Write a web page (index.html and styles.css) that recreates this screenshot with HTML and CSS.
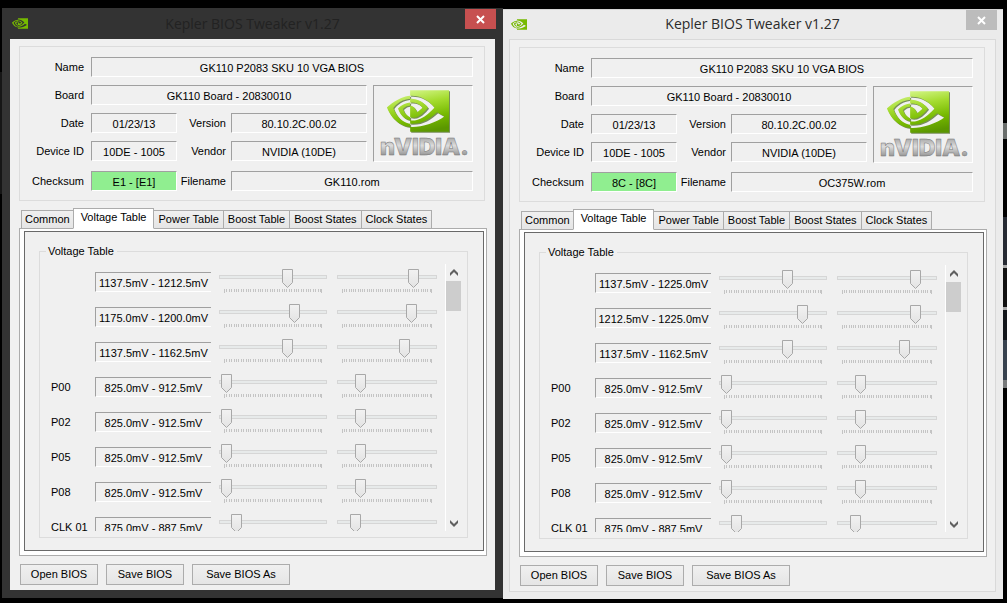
FILE: index.html
```html
<!DOCTYPE html>
<html lang="en">
<head>
<meta charset="utf-8">
<title>Kepler BIOS Tweaker v1.27</title>
<link rel="stylesheet" href="styles.css">
</head>
<body>
<svg class="defs" width="0" height="0" aria-hidden="true">
  <defs>
    <linearGradient id="green" x1="0.3" y1="0" x2="0.6" y2="1">
      <stop offset="0" stop-color="#d6f78c"/><stop offset="0.35" stop-color="#a5dc30"/><stop offset="0.7" stop-color="#76b900"/><stop offset="1" stop-color="#5b9700"/>
    </linearGradient>
    <linearGradient id="steel" x1="0" y1="0" x2="0" y2="1">
      <stop offset="0" stop-color="#8c8c8c"/><stop offset="0.45" stop-color="#dcdcdc"/><stop offset="1" stop-color="#6c6c6c"/>
    </linearGradient>
    <symbol id="eye" viewBox="0 4 24 16">
      <path d="M8.948 8.798v-1.43a6.7 6.7 0 0 1 .424-.018c3.922-.124 6.493 3.374 6.493 3.374s-2.774 3.851-5.75 3.851c-.398 0-.787-.062-1.158-.185v-4.346c1.528.185 1.837.857 2.747 2.385l2.04-1.714s-1.492-1.952-4-1.952a6.016 6.016 0 0 0-.796.035m0-4.735v2.138l.424-.027c5.45-.185 9.01 4.47 9.01 4.47s-4.08 4.964-8.33 4.964c-.37 0-.733-.035-1.095-.097v1.325c.3.035.61.062.91.062 3.957 0 6.82-2.023 9.593-4.408.459.371 2.34 1.263 2.73 1.652-2.633 2.208-8.772 3.984-12.253 3.984-.335 0-.653-.018-.971-.053v1.864H24V4.063zm0 10.326v1.131c-3.657-.654-4.673-4.46-4.673-4.46s1.758-1.944 4.673-2.262v1.237H8.94c-1.528-.186-2.73 1.245-2.73 1.245s.68 2.412 2.739 3.11M2.456 10.9s2.164-3.197 6.5-3.533V6.201C4.153 6.59 0 10.653 0 10.653s2.35 6.802 8.948 7.42v-1.237c-4.84-.6-6.492-5.936-6.492-5.936z"/>
    </symbol>
    <symbol id="cross" viewBox="0 0 9 9"><path d="M1 1l7 7M8 1l-7 7" fill="none" stroke="#fff" stroke-width="2"/></symbol>
    <symbol id="up" viewBox="0 0 8 8"><path d="M0 7V4l4-4 4 4v3L4 3z" fill="#606060"/></symbol>
    <symbol id="down" viewBox="0 0 8 8"><path d="M0 1v3l4 4 4-4V1L4 5z" fill="#606060"/></symbol>
    <symbol id="nvidia" viewBox="0 0 98 75">
      <svg x="14" y="5" width="62" height="42" viewBox="0 4 24 16" preserveAspectRatio="none"><use href="#eye" y="4" width="24" height="16" fill="#44641a" opacity="0.7"/></svg>
      <svg x="13" y="4" width="62" height="42" viewBox="0 4 24 16" preserveAspectRatio="none"><use href="#eye" y="4" width="24" height="16" fill="url(#green)"/></svg>
      <text class="wordmark" x="6" y="69">nVIDIA.</text>
    </symbol>
  </defs>
</svg>

<main class="desktop">
<section class="window dark">
  <header class="titlebar">
    <svg class="app-icon"><use href="#eye" fill="#76b900"/></svg>
    <h1>Kepler BIOS Tweaker v1.27</h1>
    <button class="close" aria-label="Close"><svg><use href="#cross"/></svg></button>
  </header>
  <div class="client">
    <div class="info">
      <label for="a-name">Name</label><output id="a-name" class="field wide">GK110 P2083 SKU 10 VGA BIOS</output>
      <label for="a-board">Board</label><output id="a-board" class="field mid">GK110 Board - 20830010</output>
      <svg class="field logo" role="img" aria-label="NVIDIA"><use href="#nvidia"/></svg>
      <label for="a-date">Date</label><output id="a-date" class="field">01/23/13</output>
      <label for="a-ver">Version</label><output id="a-ver" class="field">80.10.2C.00.02</output>
      <label for="a-dev">Device ID</label><output id="a-dev" class="field">10DE - 1005</output>
      <label for="a-ven">Vendor</label><output id="a-ven" class="field">NVIDIA (10DE)</output>
      <label for="a-sum" class="last">Checksum</label><output id="a-sum" class="field ok last">E1 - [E1]</output>
      <label for="a-file" class="last">Filename</label><output id="a-file" class="field rest last">GK110.rom</output>
    </div>
    <div class="tabs" role="tablist">
      <button role="tab">Common</button><button role="tab" aria-selected="true">Voltage Table</button><button role="tab">Power Table</button><button role="tab">Boost Table</button><button role="tab">Boost States</button><button role="tab">Clock States</button>
    </div>
    <div class="page" role="tabpanel">
      <div class="sheet">
        <fieldset class="group">
          <legend>Voltage Table</legend>
          <div class="list">
            <div class="row"><span></span><output class="field">1137.5mV - 1212.5mV</output><input type="range" aria-label="Minimum" max="93" value="61"><input type="range" class="fine" aria-label="Maximum" max="85" value="69"></div>
            <div class="row"><span></span><output class="field">1175.0mV - 1200.0mV</output><input type="range" aria-label="Minimum" max="93" value="68"><input type="range" class="fine" aria-label="Maximum" max="85" value="67"></div>
            <div class="row"><span></span><output class="field">1137.5mV - 1162.5mV</output><input type="range" aria-label="Minimum" max="93" value="61"><input type="range" class="fine" aria-label="Maximum" max="85" value="60"></div>
            <div class="row"><label for="a-p00">P00</label><output class="field">825.0mV - 912.5mV</output><input type="range" id="a-p00" max="93" value="0"><input type="range" class="fine" aria-label="P00 maximum" max="85" value="16"></div>
            <div class="row"><label for="a-p02">P02</label><output class="field">825.0mV - 912.5mV</output><input type="range" id="a-p02" max="93" value="0"><input type="range" class="fine" aria-label="P02 maximum" max="85" value="16"></div>
            <div class="row"><label for="a-p05">P05</label><output class="field">825.0mV - 912.5mV</output><input type="range" id="a-p05" max="93" value="0"><input type="range" class="fine" aria-label="P05 maximum" max="85" value="16"></div>
            <div class="row"><label for="a-p08">P08</label><output class="field">825.0mV - 912.5mV</output><input type="range" id="a-p08" max="93" value="0"><input type="range" class="fine" aria-label="P08 maximum" max="85" value="16"></div>
            <div class="row"><label for="a-clk">CLK 01</label><output class="field">875.0mV - 887.5mV</output><input type="range" id="a-clk" max="93" value="10"><input type="range" class="fine" aria-label="CLK 01 maximum" max="85" value="11"></div>
          </div>
          <div class="scrollbar">
            <button aria-label="Scroll up"><svg><use href="#up"/></svg></button>
            <div class="thumb"></div>
            <button aria-label="Scroll down"><svg><use href="#down"/></svg></button>
          </div>
        </fieldset>
      </div>
    </div>
    <div class="actions"><button>Open BIOS</button><button>Save BIOS</button><button class="long">Save BIOS As</button></div>
  </div>
</section>

<section class="window light">
  <header class="titlebar">
    <svg class="app-icon"><use href="#eye" fill="#76b900"/></svg>
    <h1>Kepler BIOS Tweaker v1.27</h1>
    <button class="close" aria-label="Close"><svg><use href="#cross"/></svg></button>
  </header>
  <div class="client">
    <div class="info">
      <label for="b-name">Name</label><output id="b-name" class="field wide">GK110 P2083 SKU 10 VGA BIOS</output>
      <label for="b-board">Board</label><output id="b-board" class="field mid">GK110 Board - 20830010</output>
      <svg class="field logo" role="img" aria-label="NVIDIA"><use href="#nvidia"/></svg>
      <label for="b-date">Date</label><output id="b-date" class="field">01/23/13</output>
      <label for="b-ver">Version</label><output id="b-ver" class="field">80.10.2C.00.02</output>
      <label for="b-dev">Device ID</label><output id="b-dev" class="field">10DE - 1005</output>
      <label for="b-ven">Vendor</label><output id="b-ven" class="field">NVIDIA (10DE)</output>
      <label for="b-sum" class="last">Checksum</label><output id="b-sum" class="field ok last">8C - [8C]</output>
      <label for="b-file" class="last">Filename</label><output id="b-file" class="field rest last">OC375W.rom</output>
    </div>
    <div class="tabs" role="tablist">
      <button role="tab">Common</button><button role="tab" aria-selected="true">Voltage Table</button><button role="tab">Power Table</button><button role="tab">Boost Table</button><button role="tab">Boost States</button><button role="tab">Clock States</button>
    </div>
    <div class="page" role="tabpanel">
      <div class="sheet">
        <fieldset class="group">
          <legend>Voltage Table</legend>
          <div class="list">
            <div class="row"><span></span><output class="field">1137.5mV - 1225.0mV</output><input type="range" aria-label="Minimum" max="93" value="61"><input type="range" class="fine" aria-label="Maximum" max="85" value="71"></div>
            <div class="row"><span></span><output class="field">1212.5mV - 1225.0mV</output><input type="range" aria-label="Minimum" max="93" value="76"><input type="range" class="fine" aria-label="Maximum" max="85" value="71"></div>
            <div class="row"><span></span><output class="field">1137.5mV - 1162.5mV</output><input type="range" aria-label="Minimum" max="93" value="61"><input type="range" class="fine" aria-label="Maximum" max="85" value="60"></div>
            <div class="row"><label for="b-p00">P00</label><output class="field">825.0mV - 912.5mV</output><input type="range" id="b-p00" max="93" value="0"><input type="range" class="fine" aria-label="P00 maximum" max="85" value="16"></div>
            <div class="row"><label for="b-p02">P02</label><output class="field">825.0mV - 912.5mV</output><input type="range" id="b-p02" max="93" value="0"><input type="range" class="fine" aria-label="P02 maximum" max="85" value="16"></div>
            <div class="row"><label for="b-p05">P05</label><output class="field">825.0mV - 912.5mV</output><input type="range" id="b-p05" max="93" value="0"><input type="range" class="fine" aria-label="P05 maximum" max="85" value="16"></div>
            <div class="row"><label for="b-p08">P08</label><output class="field">825.0mV - 912.5mV</output><input type="range" id="b-p08" max="93" value="0"><input type="range" class="fine" aria-label="P08 maximum" max="85" value="16"></div>
            <div class="row"><label for="b-clk">CLK 01</label><output class="field">875.0mV - 887.5mV</output><input type="range" id="b-clk" max="93" value="10"><input type="range" class="fine" aria-label="CLK 01 maximum" max="85" value="11"></div>
          </div>
          <div class="scrollbar">
            <button aria-label="Scroll up"><svg><use href="#up"/></svg></button>
            <div class="thumb"></div>
            <button aria-label="Scroll down"><svg><use href="#down"/></svg></button>
          </div>
        </fieldset>
      </div>
    </div>
    <div class="actions"><button>Open BIOS</button><button>Save BIOS</button><button class="long">Save BIOS As</button></div>
  </div>
</section>
</main>
</body>
</html>
```
FILE: styles.css
```css
* { box-sizing: border-box; }

body {
  margin: 0;
  background: #000;
  color: #000;
  font: 11px/13px "Liberation Sans", Arial, sans-serif;
}

button { font: inherit; color: inherit; padding: 0; border: 0; background: none; }

.defs { position: absolute; }

.desktop {
  display: grid;
  grid-template-columns: 501fr 500fr;
  height: 100vh;
  min-height: 420px;
  padding: 8px 4px 4px 2px;
  background:
    linear-gradient(#0000 123px, #6a6e6c 123px 139px, #0000 139px 217px, #262a33 217px 265px, #aaa 265px 268px, #111 268px 307px, #aaa 307px 310px, #14171c 310px 340px, #38424f 340px 380px, #77797a 380px 388px, #0000 388px) right / 4px 100% no-repeat,
    linear-gradient(#0000 72px, #161616 72px 194px, #0000 194px) left / 2px 100% no-repeat,
    #000;
}

/* Window frame */
.window { min-width: 440px; min-height: 0; display: flex; flex-direction: column; }
.dark { background: #333; padding: 0 8px 8px; margin-bottom: 1px; }
.light { background: #ebebeb; padding: 0 7px 7px 6px; margin-top: 1px; box-shadow: inset 0 1px #d4d4d4; }

.titlebar { display: grid; grid-template-columns: 1fr auto 1fr; align-items: center; height: 31px; flex: none; }
.light .titlebar { height: 30px; }
.titlebar h1 { margin: 0; font: 14px/30px "Open Sans", "Noto Sans", sans-serif; color: #2b2b2b; }
.dark h1 { color: #222; }
.app-icon { width: 16px; height: 11px; margin-left: 2px; }
.close { justify-self: end; align-self: start; width: 31px; height: 20px; margin: 1px -1px 0 0; background: #bcbcbc; display: grid; place-items: center; }
.dark .close { background: #c75050; }
.close svg { width: 9px; height: 9px; }

.client { flex: 1; min-height: 0; display: flex; flex-direction: column; background: #f0f0f0; padding: 7px 8px 5px 9px; }
.light .client { border: 1px solid #d9d9d9; }

/* Sunken read-only values */
.field {
  height: 20px;
  border: 1px solid;
  border-color: #a0a0a0 #fff #fff #a0a0a0;
  line-height: 20px;
  text-align: center;
  white-space: nowrap;
}
.ok { background: #90ee90; }

.info {
  display: grid;
  grid-template-columns: 71px 86px 54px 1fr 106px;
  grid-auto-rows: 20px;
  row-gap: 8px;
  margin-right: 2px;
  padding: 10px 11px 11px 0;
  border: 1px solid #dcdcdc;
  flex: none;
}
.info label { text-align: right; padding: 4px 7px 0 0; }
.info output + label { padding-right: 5px; }
.info .wide { grid-column: 2 / 6; }
.info .mid { grid-column: 2 / 5; }
.info .rest { grid-column: 4 / 6; }
.info .last { margin-top: 2px; }
.info label[for$="name"], .info label[for$="board"], .info label[for$="date"], .info label[for$="dev"], .info label[for$="sum"] { grid-column: 1; padding-right: 7px; }
.logo { grid-area: 2 / 5 / 5 / 6; width: 100px; height: 77px; margin-left: 6px; }
.wordmark { font: 900 23px Inter, "Liberation Sans", sans-serif; fill: url(#steel); stroke: #777; stroke-width: 0.5px; }

/* Tabs */
.tabs { display: flex; align-items: flex-end; margin: 7px 0 -1px 2px; flex: none; }
.tabs button {
  height: 19px;
  padding: 0 4px;
  margin-right: -1px;
  border: 1px solid #acacac;
  background: linear-gradient(#f0f0f0, #e5e5e5);
  white-space: nowrap;
}
.tabs button:first-child { padding: 0 3px; }
.tabs button[aria-selected] { height: 21px; padding: 0 7px 2px; background: #fff; border-bottom-color: #fff; z-index: 1; }

.page { flex: 1; min-height: 0; display: flex; border: 1px solid #acacac; background: #fff; padding: 2px 2px 4px 4px; }
.sheet { flex: 1; min-width: 0; display: flex; border: 1px solid #696969; background: #f0f0f0; padding: 13px 15px 12px 14px; }

.group { flex: 1; min-width: 0; display: flex; margin: 0; padding: 6px 6px 6px 8px; border: 1px solid #dcdcdc; }
.group legend { margin-left: -2px; padding: 0 3px 0 2px; }

/* Voltage rows */
.list { flex: 1; min-width: 0; padding-top: 5px; overflow: hidden; }
.row { display: grid; grid-template-columns: 47px 116px 116fr 110fr; height: 35px; align-items: start; padding-right: 8px; }
.row label { padding: 7px 0 0 3px; }
.row .field { margin-top: 3px; border-right: 0; }

input[type="range"] {
  appearance: none;
  min-width: 0;
  height: 24px;
  margin: 0 0 0 8px;
  padding: 0 2px;
  background:
    linear-gradient(#e7eaea, #e7eaea) 1px 7px / calc(100% - 2px) 2px no-repeat,
    linear-gradient(#d6d6d6, #d6d6d6) 0 6px / 100% 4px no-repeat,
    linear-gradient(#c4c4c4, #c4c4c4) 5px 20px / 1px 4px no-repeat,
    linear-gradient(#c4c4c4, #c4c4c4) right 5px top 20px / 1px 4px no-repeat,
    repeating-linear-gradient(90deg, #c4c4c4 0 1px, #0000 1px 2px, #c4c4c4 2px 3px, #0000 3px 5px, #c4c4c4 5px 6px, #0000 6px 7px, #c4c4c4 7px 8px, #0000 8px 10px, #c4c4c4 10px 11px, #0000 11px 12px) 5px 20px / calc(100% - 10px) 3px no-repeat;
}
input[type="range"].fine {
  margin-left: 10px;
  background:
    linear-gradient(#e7eaea, #e7eaea) 1px 7px / calc(100% - 2px) 2px no-repeat,
    linear-gradient(#d6d6d6, #d6d6d6) 0 6px / 100% 4px no-repeat,
    linear-gradient(#c4c4c4, #c4c4c4) 5px 20px / 1px 4px no-repeat,
    linear-gradient(#c4c4c4, #c4c4c4) right 5px top 20px / 1px 4px no-repeat,
    repeating-linear-gradient(90deg, #c4c4c4 0 1px, #0000 1px 2px, #c4c4c4 2px 3px, #0000 3px 4px, #c4c4c4 4px 5px, #0000 5px 7px, #c4c4c4 7px 8px, #0000 8px 9px) 5px 20px / calc(100% - 10px) 3px no-repeat;
}
input[type="range"]::-webkit-slider-runnable-track { height: 24px; }
input[type="range"]::-webkit-slider-thumb {
  appearance: none;
  width: 11px;
  height: 19px;
  background: url("data:image/svg+xml,%3Csvg xmlns='http://www.w3.org/2000/svg' width='11' height='19'%3E%3ClinearGradient id='g' x2='0' y2='1'%3E%3Cstop stop-color='%23f2f2f2'/%3E%3Cstop offset='1' stop-color='%23e3e3e3'/%3E%3C/linearGradient%3E%3Cpath d='M.5.5h10v13l-5 5-5-5z' fill='url(%23g)' stroke='%23a8a8a8'/%3E%3C/svg%3E") no-repeat;
}

.scrollbar { width: 16px; display: flex; flex-direction: column; border-left: 1px solid #fff; }
.scrollbar button { height: 17px; display: grid; place-items: center; }
.scrollbar button:last-child { margin-top: auto; }
.scrollbar svg { width: 8px; height: 8px; }
.thumb { height: 30px; background: #cdcdcd; }

/* Bottom buttons */
.actions { display: flex; gap: 8px; margin: 8px 0 0 1px; flex: none; }
.actions button { width: 78px; height: 21px; border: 1px solid #acacac; background: linear-gradient(#f0f0f0, #e5e5e5); }
.actions .long { width: 98px; }
```
